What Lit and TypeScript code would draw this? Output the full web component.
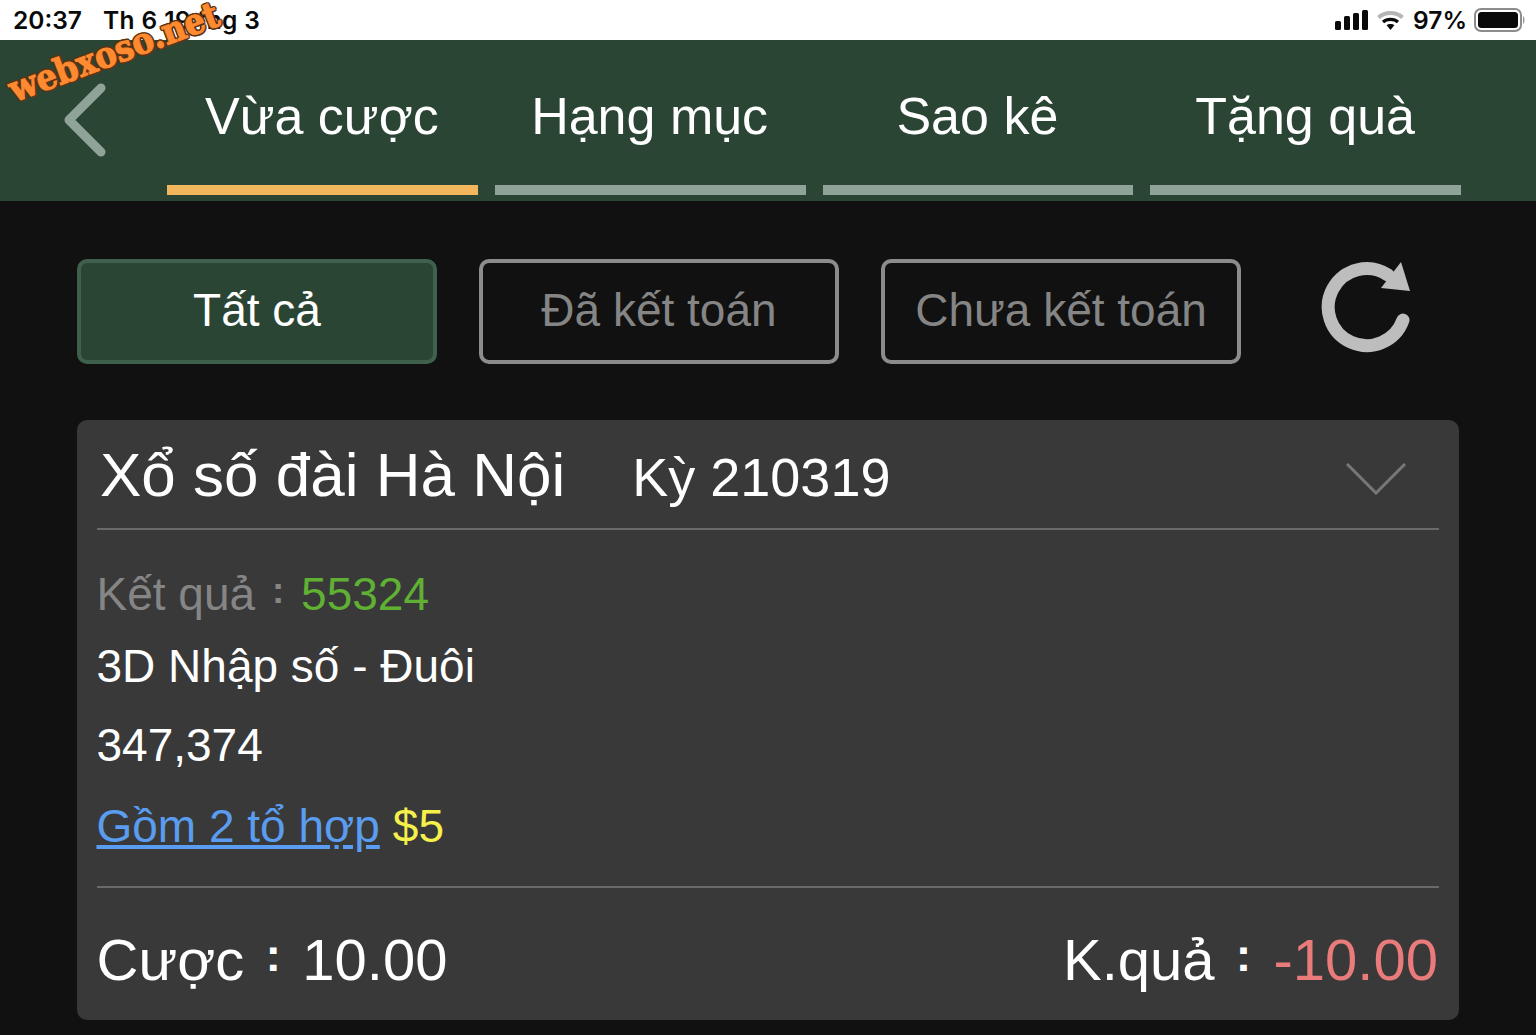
import { LitElement, html, css } from "lit";
import { customElement } from "lit/decorators.js";

@customElement("app-root")
export class AppRoot extends LitElement {
  static styles = css`
    :host { display: block; position: relative; width: 1536px; height: 1035px; overflow: hidden; background: #111111; font-family: "Liberation Sans", Arial, sans-serif; color: #fff; }
    .status { height: 40px; background: #fff; color: #0a0a0a; display: flex; align-items: center; padding: 0 10px 0 13px; font-family: Inter, sans-serif; font-weight: 600; font-size: 24.500px; }
    .status .date { margin-left: 21px; letter-spacing: 0.400px; }
    .status .right { margin-left: auto; display: flex; align-items: center; }
    .status .pct { margin: 0 7px 0 9px; }
    .status svg { display: block; }
    .wifi { margin-left: 8px; }
    .header { height: 161px; background: #2b4535; display: flex; }
    .back { width: 167px; flex: none; padding: 43px 0 0 60px; box-sizing: border-box; }
    .back svg { display: block; }
    .tabs { display: flex; gap: 17px; }
    .tab { width: 310.750px; height: 155px; display: flex; flex-direction: column; }
    .tab span { flex: 1; display: flex; justify-content: center; align-items: center; font-size: 52px; padding-top: 6px; margin-left: -1px; }
    .tab i { display: block; height: 10px; background: #8fa398; }
    .tab.on i { background: #f2b75c; }
    .filters { display: flex; align-items: center; padding: 58px 0 0 77px; }
    .btn { width: 360px; height: 105px; box-sizing: border-box; border: 4px solid #8c8c8c; border-radius: 10px; margin-right: 42px; display: flex; align-items: center; justify-content: center; font-size: 46px; color: #858585; padding-bottom: 4px; }
    .btn.on { background: #2b4535; border-color: #40604e; color: #fff; }
    .refresh { margin: -9px 0 0 37px; display: block; }
    .card { margin: 56px 0 0 77px; width: 1382px; height: 600px; background: #393939; border-radius: 10px; padding: 0 20px; box-sizing: border-box; }
    .card-head { height: 110px; border-bottom: 2px solid #6a6a6a; display: flex; align-items: center; box-sizing: border-box; }
    .title { font-size: 62px; margin-left: 3px; }
    .ky { font-size: 54px; margin-left: 67px; padding-top: 6px; }
    .chev { margin: 10px 33px 0 auto; display: block; }
    .body { height: 358px; border-bottom: 2px solid #6a6a6a; box-sizing: border-box; padding-top: 29px; font-size: 46px; }
    .row { height: 70px; display: flex; align-items: center; margin-left: -0.500px; }
    .row.r2 { margin-top: 2px; }
    .row.r3 { margin-top: 9px; }
    .row.r4 { margin-top: 11px; }
    .muted { color: #858585; }
    .colon { display: inline-block; width: 1.250em; text-align: center; font-size: 0.800em; font-weight: 700; line-height: 1; vertical-align: 0.180em; }
    .green { color: #5fb033; }
    a { color: #5a9df0; text-decoration: underline; }
    .gold { color: #f5f04a; margin-left: 13px; }
    .foot { height: 130px; display: flex; justify-content: space-between; align-items: center; font-size: 58px; padding: 12px 1px 0 0; margin-left: -0.500px; box-sizing: border-box; }
    .red { color: #e97b7b; margin-left: 1px; }
    .mark { position: absolute; left: 10px; top: 70px; font-family: "DejaVu Serif", serif; font-stretch: condensed; font-weight: 700; font-size: 36px; line-height: 40px; color: #ff8a30; transform: rotate(-20.500deg); transform-origin: left center; -webkit-text-stroke: 1px #ff8a30; text-shadow: 2px 0 0 #5c3414, -2px 0 0 #5c3414, 0 2px 0 #5c3414, 0 -2px 0 #5c3414, 1.500px 1.500px 0 #5c3414, -1.500px -1.500px 0 #5c3414, 1.500px -1.500px 0 #5c3414, -1.500px 1.500px 0 #5c3414; white-space: nowrap; }
  `;

  render() {
    return html`
      <div class="status">
        <span>20:37</span><span class="date">Th 6 19 thg 3</span>
        <div class="right">
          <svg width="34" height="20" viewBox="0 0 34 20" fill="#0a0a0a"><rect x="0" y="11" width="6" height="9" rx="1.500"/><rect x="9" y="6" width="6" height="14" rx="1.500"/><rect x="18" y="3" width="6" height="17" rx="1.500"/><rect x="27" y="0" width="6" height="20" rx="1.500"/></svg>
          <svg class="wifi" width="27" height="21" viewBox="0 0 27 21" fill="none"><path d="M1.500 7.500 C8 1.500 19 1.500 25.500 7.500" stroke="#b5b5b5" stroke-width="4"/><path d="M6 12 C10 8.500 17 8.500 21 12" stroke="#0a0a0a" stroke-width="3.200"/><path d="M9.500 15 L13.500 20 L17.500 15 C15.500 13.500 11.500 13.500 9.500 15Z" fill="#0a0a0a"/></svg>
          <span class="pct">97%</span>
          <svg width="52" height="24" viewBox="0 0 52 24"><rect x="1" y="1" width="46" height="22" rx="6" fill="none" stroke="#8c8c8c" stroke-width="2"/><rect x="4" y="4" width="40" height="16" rx="3.500" fill="#0a0a0a"/><path d="M49 8 C51 9 51 15 49 16Z" fill="#9a9a9a"/></svg>
        </div>
      </div>
      <div class="header">
        <div class="back">
          <svg width="50" height="76" viewBox="0 0 50 76" fill="none"><path d="M41 5 L9 37 L41 69" stroke="#8fa398" stroke-width="9" stroke-linecap="round" stroke-linejoin="round"/></svg>
        </div>
        <div class="tabs">
          ${["Vừa cược", "Hạng mục", "Sao kê", "Tặng quà"].map((t, i) => html`<div class="tab ${i === 0 ? "on" : ""}"><span>${t}</span><i></i></div>`)}
        </div>
      </div>
      <div class="filters">
        <div class="btn on">Tất cả</div>
        <div class="btn">Đã kết toán</div>
        <div class="btn">Chưa kết toán</div>
        <svg class="refresh" width="92" height="94" viewBox="0 0 92 94" fill="none"><path d="M83 60 A38.500 38.500 0 1 1 68 15" stroke="#bdbdbd" stroke-width="13" stroke-linecap="round"/><polygon points="90,31 81,2 61,28" fill="#bdbdbd"/></svg>
      </div>
      <div class="card">
        <div class="card-head">
          <span class="title">Xổ số đài Hà Nội</span><span class="ky">Kỳ 210319</span>
          <svg class="chev" width="60" height="32" viewBox="0 0 60 32" fill="none"><path d="M1 1 L30 30 L59 1" stroke="#777" stroke-width="3"/></svg>
        </div>
        <div class="body">
          <div class="row"><span class="muted">Kết quả<span class="colon">:</span></span><span class="green">55324</span></div>
          <div class="row r2">3D Nhập số - Đuôi</div>
          <div class="row r3">347,374</div>
          <div class="row r4"><a>Gồm 2 tổ hợp</a><span class="gold">$5</span></div>
        </div>
        <div class="foot">
          <span>Cược<span class="colon">:</span>10.00</span>
          <span>K.quả<span class="colon">:</span><span class="red">-10.00</span></span>
        </div>
      </div>
      <div class="mark">webxoso.net</div>
    `;
  }
}
